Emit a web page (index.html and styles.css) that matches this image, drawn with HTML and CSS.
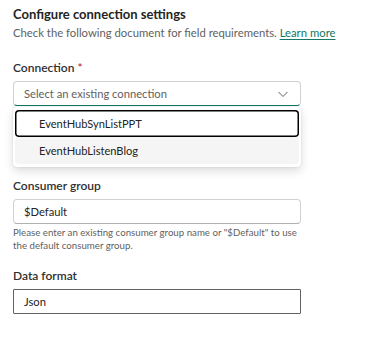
FILE: index.html
```html
<!DOCTYPE html>
<html>
  <head>
    <title>Configure connection settings</title>
    <link rel="stylesheet" href="styles.css">
  </head>
  <body>
    <main class="panel">
      <h2 class="title">Configure connection settings</h2>
      <p class="intro">Check the following document for field requirements. <a href="#">Learn more</a></p>

      <div class="field field-connection">
        <label class="label">Connection <span class="req">*</span></label>
        <div class="combo">
          <button class="dropdown" type="button">
            <span>Select an existing connection</span>
            <svg width="12" height="12" viewBox="0 0 12 12"><path d="M1.5 4 L6 8.5 L10.5 4" fill="none" stroke="#616161" stroke-width="1"/></svg>
          </button>
          <ul class="listbox">
            <li class="option active">EventHubSynListPPT</li>
            <li class="option hover">EventHubListenBlog</li>
          </ul>
        </div>
      </div>

      <div class="field field-consumer">
        <label class="label">Consumer group</label>
        <input class="input" type="text" value="$Default">
        <p class="hint">Please enter an existing consumer group name or "$Default" to use the default consumer group.</p>
      </div>

      <div class="field field-format">
        <label class="label">Data format</label>
        <input class="input input-strong" type="text" value="Json">
      </div>
    </main>
  </body>
</html>
```

FILE: styles.css
```css
html, body {
  margin: 0;
  background: white;
  color: #242424;
  font-family: Lato, 'Liberation Sans', sans-serif;
}

/* page layout */
.panel {
  padding: 5px 0 0 13px;
}

.title {
  margin: 0;
  font-size: 13px;
  line-height: 18px;
  font-weight: 700;
}

.intro {
  margin: 2px 0 0;
  font-size: 11.3px;
  line-height: 16px;
  color: #616161;
}

.intro a {
  color: #117865;
  text-decoration: underline;
  text-underline-offset: 2px;
}

/* fields */
.field {
  display: flex;
  flex-direction: column;
  width: 288px;
}

.field-connection { margin-top: 19px; }
.field-consumer { margin-top: 72px; }
.field-format { margin-top: 17px; }

.label {
  font-size: 12px;
  line-height: 16px;
  font-weight: 600;
  color: #303030;
  margin-bottom: 5px;
}

.req {
  color: #c50f1f;
  font-weight: 400;
}

.combo {
  position: relative;
}

.dropdown {
  width: 288px;
  height: 25px;
  display: flex;
  align-items: center;
  justify-content: space-between;
  padding: 0 11px 0 10px;
  border: 1px solid #d1d1d1;
  border-bottom: 1px solid #117865;
  border-radius: 4px;
  background: white;
  font: inherit;
  font-size: 11.2px;
  color: #616161;
}

.dropdown svg {
  margin-top: 1px;
}

.listbox {
  position: absolute;
  left: 0;
  top: 26px;
  width: 288px;
  box-sizing: border-box;
  margin: 0;
  padding: 3px 2px;
  list-style: none;
  background: white;
  border-radius: 4px;
  box-shadow: 0 0 2px #0000001f, 0 4px 10px #00000024;
}

.option {
  height: 27px;
  display: flex;
  align-items: center;
  padding-left: 24px;
  font-size: 11.1px;
  border-radius: 4px;
}

.option.active {
  box-shadow: inset 0 0 0 1.5px #000;
}

.option.hover {
  background: #f5f5f5;
}

.input {
  width: 288px;
  height: 25px;
  box-sizing: border-box;
  padding: 0 10px;
  border: 1px solid #d1d1d1;
  border-bottom-color: #b0b0b0;
  border-radius: 4px;
  font: inherit;
  font-size: 11.2px;
  color: #242424;
}

.input-strong {
  border-color: #616161;
  border-radius: 1px;
}

.hint {
  margin: 2px 0 0;
  font-size: 9.7px;
  line-height: 12.7px;
  color: #616161;
}
```
